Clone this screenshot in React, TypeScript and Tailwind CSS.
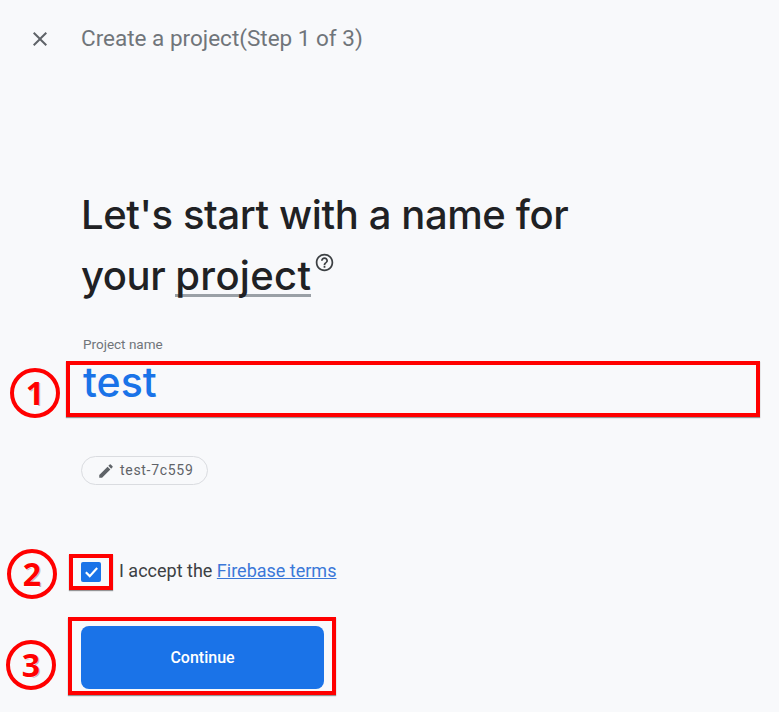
import React from 'react';

const Marker: React.FC<{ n: number; className: string }> = ({ n, className }) => (
  <div className={`absolute w-[50px] h-[50px] rounded-full border-[4px] border-[#ff0000] flex items-center justify-center font-['Open_Sans',sans-serif] font-bold text-[32px] text-[#ff0000] [text-shadow:-1px_1px_0_#fff,1px_1px_0_#bbb] ${className}`}>
    {n}
  </div>
);

const RedBox: React.FC<{ className: string }> = ({ className }) => (
  <div className={`absolute border-[4px] border-[#ff0000] shadow-[0_1px_1px_rgba(0,0,0,0.4)] ${className}`} />
);

export default function App() {
  return (
    <div className="relative w-[779px] h-[712px] overflow-hidden bg-[#f8f9fb] font-['Roboto',sans-serif]">
      {/* Header */}
      <div className="flex items-center h-[24px] mt-[27px] pl-[28px]">
        <svg width="24" height="24" viewBox="0 0 24 24" className="text-[#5f6368]" fill="currentColor">
          <path d="M19 6.41 17.59 5 12 10.59 6.41 5 5 6.41 10.59 12 5 17.59 6.41 19 12 13.41 17.59 19 19 17.59 13.41 12z" />
        </svg>
        <span className="ml-[29px] text-[22.5px] text-[#70757a]">Create a project(Step 1 of 3)</span>
      </div>

      <div className="pl-[81px]">
        <h1 className="mt-[133px] text-[40px] leading-[61px] font-medium text-[#202124] font-['Inter',sans-serif] tracking-[-0.4px]">
          <div>Let's start with a name for</div>
          <div className="flex items-start">
            <span>your</span>
            <span className="ml-[10px] h-[52px] border-b-[3px] border-[#9aa0a6] tracking-[0.3px]">project</span>
            <svg width="21" height="21" viewBox="0 0 24 24" fill="#3c4043" className="ml-[3px] mt-[7px]">
              <path d="M11 18h2v-2h-2v2zm1-16C6.48 2 2 6.48 2 12s4.48 10 10 10 10-4.480 10-10S17.520 2 12 2zm0 18c-4.410 0-8-3.590-8-8s3.590-8 8-8 8 3.590 8 8-3.590 8-8 8zm0-14c-2.210 0-4 1.790-4 4h2c0-1.100.9-2 2-2s2 .9 2 2c0 2-3 1.750-3 5h2c0-2.250 3-2.500 3-5 0-2.210-1.790-4-4-4z" />
            </svg>
          </div>
        </h1>

        <div className="mt-[28px] pl-[2px] text-[13.5px] leading-[20px] text-[#70757a]">Project name</div>
        <div className="mt-[7px] text-[41px] leading-[42px] font-medium text-[#1a73e8] font-['Inter',sans-serif] pl-[2px]">test</div>

        <div className="mt-[53px] flex items-center h-[29px] w-[127px] pl-[15px] rounded-full border border-[#dadce0]">
          <svg width="18" height="18" viewBox="0 0 24 24" fill="#5f6368">
            <path d="M3 17.250V21h3.750L17.810 9.940l-3.750-3.750L3 17.250zM20.710 7.040a1 1 0 0 0 0-1.410l-2.340-2.340a1 1 0 0 0-1.410 0l-1.830 1.830 3.750 3.750 1.830-1.830z" />
          </svg>
          <span className="ml-[5px] text-[14px] tracking-[0.7px] text-[#5f6368]">test-7c559</span>
        </div>

        <div className="mt-[74px] flex items-center h-[24px]">
          <div className="w-[20px] h-[20px] mt-[1px] rounded-[2px] bg-[#1a73e8] flex items-center justify-center">
            <svg width="17" height="17" viewBox="0 0 24 24" fill="none" stroke="#fff" strokeWidth="3">
              <path d="M4 13l5.500 5.500L20 7" />
            </svg>
          </div>
          <span className="ml-[18px] text-[18px] text-[#3c4043] mt-[-1px]">
            I accept the{' '}
            <a href="#" className="text-[#3b78d8] underline">Firebase terms</a>
          </span>
        </div>

        <button className="block mt-[43px] w-[243px] h-[63px] rounded-[8px] bg-[#1a73e8] text-white text-[16px] font-medium">
          Continue
        </button>
      </div>

      {/* Annotations over the page */}
      <RedBox className="left-[66px] top-[361px] w-[694px] h-[56px]" />
      <RedBox className="left-[69px] top-[554px] w-[44px] h-[36px]" />
      <RedBox className="left-[68px] top-[617px] w-[268px] h-[78px]" />
      <Marker n={1} className="left-[10px] top-[368px]" />
      <Marker n={2} className="left-[7px] top-[549px]" />
      <Marker n={3} className="left-[6px] top-[640px]" />
    </div>
  );
}
